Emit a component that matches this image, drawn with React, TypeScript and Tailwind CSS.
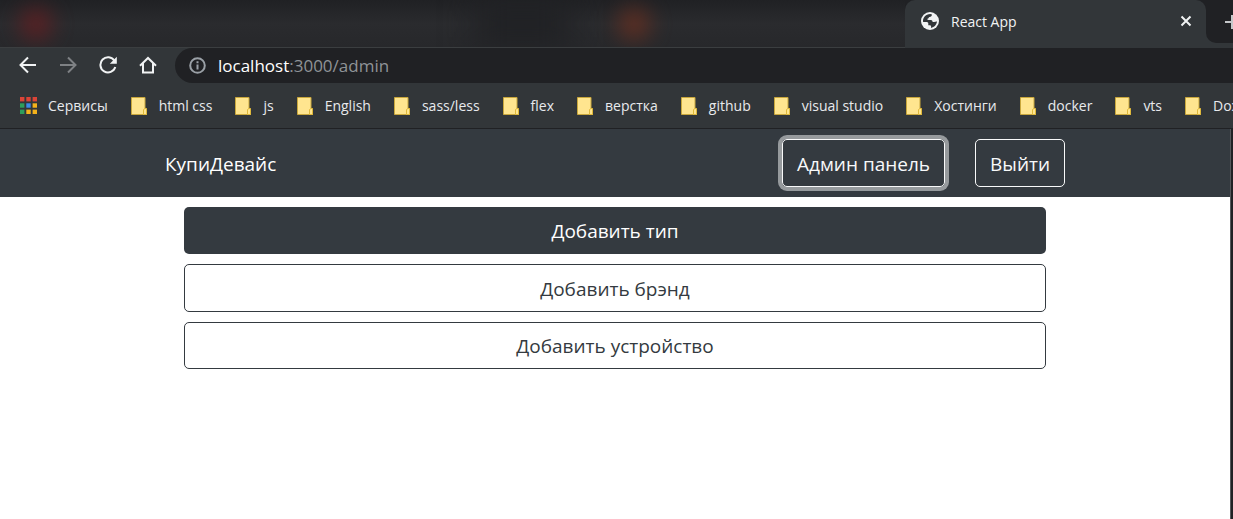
const folders = [
  "html css", "js", "English", "sass/less", "flex", "верстка", "github",
  "visual studio", "Хостинги", "docker", "vts", "Dox",
];

const appCells = [
  "#db4437", "#db4437", "#db4437",
  "#2e9e5b", "#3b8be8", "#f4b21b",
  "#2e9e5b", "#f4b21b", "#f4b21b",
];

function AppsIcon() {
  return (
    <svg className="size-[17px] shrink-0" viewBox="0 0 17 17" aria-hidden="true">
      {appCells.map((fill, i) => (
        <rect key={i} x={(i % 3) * 6.3} y={Math.floor(i / 3) * 6.3} width="4.4" height="4.4" fill={fill} />
      ))}
    </svg>
  );
}

function FolderIcon() {
  return (
    <svg className="h-[18px] w-4 shrink-0" viewBox="0 0 16 18" aria-hidden="true">
      <path d="M.5.5H14V12h1.500v5.500H.5z" fill="#ffe58f" stroke="#c9a73c" />
      <path d="M12.500 17v-4.500l1.500-1h1.500v6h-3" fill="#ffe58f" stroke="#e0b93a" />
    </svg>
  );
}

function TabStrip() {
  return (
    <div className="flex h-12 items-stretch justify-between overflow-hidden bg-[#202124]">
      <div className="relative grow overflow-hidden border-b border-[#3b3e40] bg-linear-to-b from-[#202124] via-[#2a2b2e] to-[#27282b]" aria-hidden="true">
        <div className="absolute top-2 left-5 h-8 w-8 rounded-full bg-[#6a1d20] opacity-80 blur-[11px]" />
        <div className="absolute top-2 left-[618px] h-8 w-8 rounded-full bg-[#70301f] opacity-80 blur-[11px]" />
        <div className="absolute top-0 left-[475px] h-12 w-24 bg-[#202124] blur-[16px]" />
      </div>
      <div className="flex w-[301px] shrink-0 items-center rounded-t-[10px] bg-[#323639] pr-3.5 pb-1.5 pl-4">
        <svg className="size-[18px] shrink-0" viewBox="0 0 18 18" aria-hidden="true">
          <circle cx="9" cy="9" r="9" fill="#f1f3f4" />
          <path d="M9.200 2 11 2.400C10.800 4 10 4.700 8.500 4.900 7.600 5 7.700 6.500 6.500 6.800 6 7 6.300 8 7.500 8h2.400c1.300 0 1.700 1 1.700 2h1.500c1 0 1.700-.5 2.900-.4-.3 3-2.900 5.900-5.900 6.300v-1.500c0-.9-.7-1.200-1.600-1.200H7.300V11.500c0-1-.8-1.500-1.800-1.500H2.100C1.500 6 4.500 2.300 9.200 2z" fill="#323639" />
        </svg>
        <span className="ml-3 grow text-[14px] text-[#f1f3f4]">React App</span>
        <button type="button" aria-label="Закрыть вкладку">
          <svg className="size-3" viewBox="0 0 12 12" stroke="#f1f3f4" strokeWidth="2" aria-hidden="true">
            <path d="m1.500 1.500 9 9m0-9-9 9" />
          </svg>
        </button>
      </div>
      <div className="flex w-[27px] shrink-0 flex-col bg-[#323639]">
        <button type="button" aria-label="Новая вкладка" className="h-[43px] overflow-hidden rounded-bl-[10px] bg-[#202124] pl-[19px]">
          <svg className="size-3.5" viewBox="0 0 14 14" stroke="#c4c7c9" strokeWidth="2" aria-hidden="true">
            <path d="M7 0v14M0 7h14" />
          </svg>
        </button>
      </div>
    </div>
  );
}

function AddressBar() {
  return (
    <div className="flex h-[35px] items-center bg-[#323639] pl-[19px]">
      <div className="flex w-[156px] shrink-0 gap-[22px] pb-0.5">
        <button type="button" aria-label="Назад">
          <svg className="size-[18px]" viewBox="0 0 18 18" fill="none" stroke="#f1f3f4" strokeWidth="2" aria-hidden="true">
            <path d="M17 9H2M9 1.500 1.500 9 9 16.500" />
          </svg>
        </button>
        <button type="button" aria-label="Вперёд">
          <svg className="size-[18px]" viewBox="0 0 18 18" fill="none" stroke="#7e8184" strokeWidth="2" aria-hidden="true">
            <path d="M1 9h15M9 1.500 16.500 9 9 16.500" />
          </svg>
        </button>
        <button type="button" aria-label="Обновить">
          <svg className="size-[18px]" viewBox="0 0 18 18" fill="none" stroke="#f1f3f4" strokeWidth="2" aria-hidden="true">
            <path d="M15.500 4.800A7.600 7.600 0 1 0 16.300 11" />
            <path d="M17.800.8v7h-7z" fill="#f1f3f4" stroke="none" />
          </svg>
        </button>
        <button type="button" aria-label="Домашняя страница">
          <svg className="size-[18px]" viewBox="0 0 18 18" fill="none" stroke="#f1f3f4" strokeWidth="2" aria-hidden="true">
            <path d="M1 9.800 9 2l8 7.800M4 7.500V16.500h10V7.500" />
          </svg>
        </button>
      </div>
      <div className="flex h-[35px] grow items-center rounded-l-full bg-[#202124] pl-[14px]">
        <svg className="size-[17px] shrink-0" viewBox="0 0 17 17" fill="none" stroke="#9aa0a6" strokeWidth="2" aria-hidden="true">
          <circle cx="8.500" cy="8.500" r="7.300" />
          <path d="M8.500 7.500v5M8.500 4.300v2" />
        </svg>
        <p className="ml-3 text-[17px] text-[#8f9397]">
          <span className="text-white">localhost</span>:3000/admin
        </p>
      </div>
    </div>
  );
}

function Bookmarks() {
  return (
    <nav className="flex h-[46px] items-center gap-[23px] overflow-hidden border-b border-[#202124] bg-[#323639] pl-5 text-[14px] whitespace-nowrap text-[#e8eaed]">
      <a href="#apps" className="flex shrink-0 items-center gap-[11px]"><AppsIcon />Сервисы</a>
      {folders.map((name) => (
        <a key={name} href="#folder" className="flex shrink-0 items-center gap-3"><FolderIcon />{name}</a>
      ))}
    </nav>
  );
}

const outline = "h-12 rounded-[5px] border border-[#f8f9fa] px-3.5 pt-0.5";

export default function App() {
  return (
    <div className="flex min-h-screen flex-col bg-white font-['Open_Sans','Noto_Sans',sans-serif]">
      <header>
        <TabStrip />
        <AddressBar />
        <Bookmarks />
      </header>
      <div className="flex grow border-r-2 border-[#202124]">
        <div className="grow border-r border-[#55585b] text-[19px]">
          <div className="bg-[#343a40]">
            <div className="mx-auto flex h-[68px] max-w-[900px] items-center">
              <a href="#shop" className="grow pt-0.5 text-white">КупиДевайс</a>
              <button type="button" className={`${outline} mr-[30px] text-[#f8f9fa] ring-4 ring-[#969a9d]`}>Админ панель</button>
              <button type="button" className={`${outline} text-[#f8f9fa]`}>Выйти</button>
            </div>
          </div>
          <main className="mx-auto flex max-w-[862px] flex-col gap-2.5 pt-2.5 text-[#343a40]">
            <button type="button" className="h-[47px] rounded-[5px] bg-[#343a40] pt-0.5 text-white">Добавить тип</button>
            <button type="button" className="h-12 rounded-[5px] border border-[#343a40] pt-0.5">Добавить брэнд</button>
            <button type="button" className="h-[47px] rounded-[5px] border border-[#343a40] pt-0.5">Добавить устройство</button>
          </main>
        </div>
      </div>
    </div>
  );
}
